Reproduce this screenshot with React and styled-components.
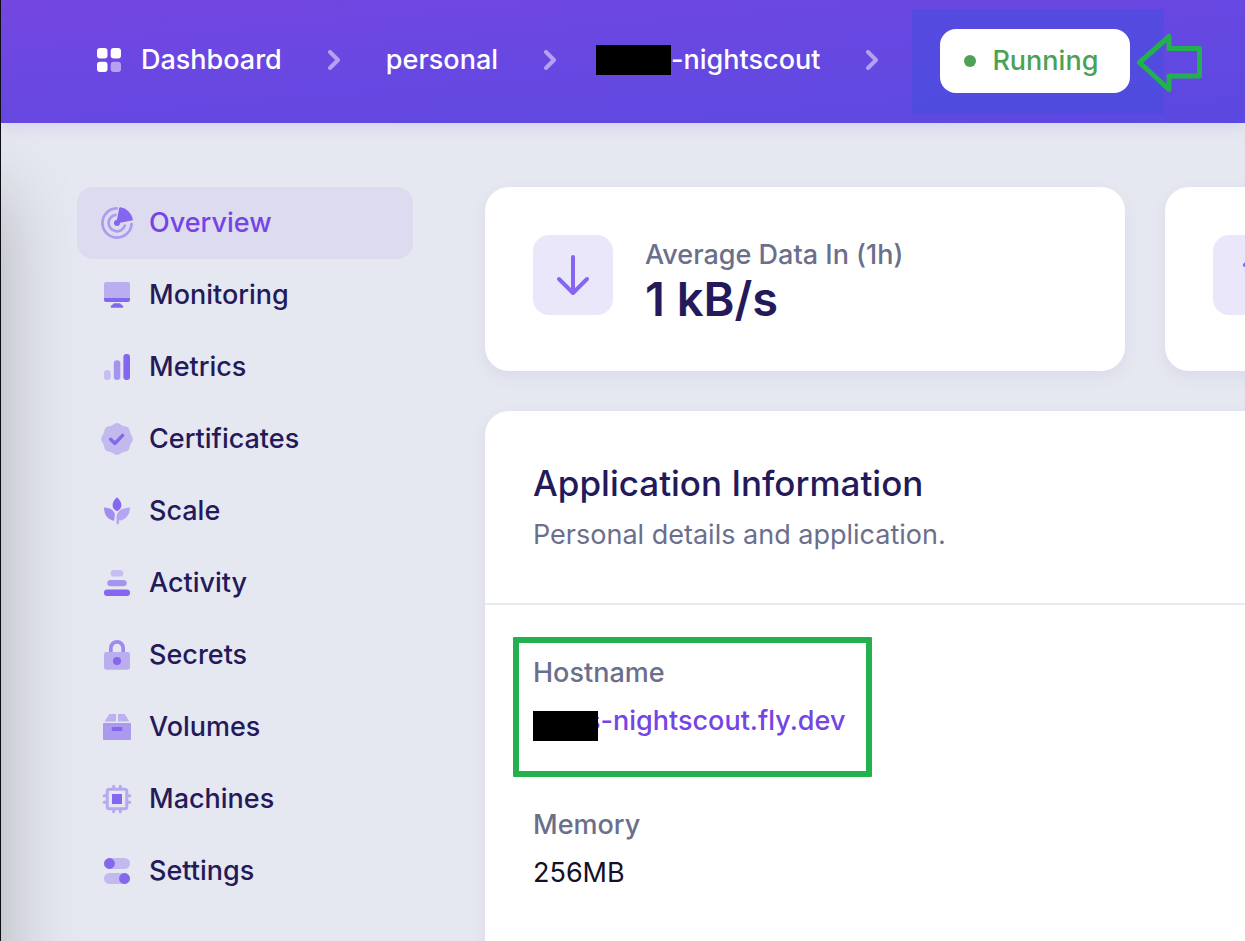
import React from "react";
import styled, { createGlobalStyle } from "styled-components";

const GlobalStyle = createGlobalStyle`
  *, *::before, *::after { box-sizing: border-box; }
  body {
    margin: 0;
    background: #e5e8f0;
    font-family: Inter, "Liberation Sans", sans-serif;
    font-size: 27px;
    line-height: 40px;
    color: #241a5a;
  }
  ul, ol, dl, dd, h2, p { margin: 0; padding: 0; }
  ul, ol { list-style: none; }
  a { color: inherit; text-decoration: none; }
`;

const Page = styled.div`
  display: flex;
  flex-direction: column;
  min-height: 100vh;
  border-left: 1px solid #0d0d14;
  overflow: hidden;
`;

const Header = styled.header`
  display: flex;
  align-items: center;
  height: 123px;
  padding-left: 96px;
  background: linear-gradient(175deg, #7446e2, #5a49e0);
  box-shadow: 0 2px 16px rgba(112, 70, 200, 0.16);
  position: relative;
  white-space: nowrap;
`;

const Crumbs = styled.ol`
  display: flex;
  align-items: center;
  padding-bottom: 4px;
  color: #fff;
  font-weight: 500;
`;

const Crumb = styled.li`
  display: flex;
  align-items: center;
`;

const CrumbLink = styled.a`
  display: flex;
  align-items: center;
  gap: 20px;
`;

const Chevron = styled.svg`
  flex: none;
  width: 12px;
  height: 20px;
  margin: 0 ${(p) => (p.$tight ? 40 : 46)}px 0 46px;
`;

const Redaction = styled.span`
  display: inline-block;
  position: relative;
  flex: none;
  width: ${(p) => p.$width}px;
  height: 30px;
  background: #000;
`;

const NamedApp = styled.a`
  display: flex;
  align-items: center;
`;

const StatusArea = styled.div`
  position: relative;
  flex: none;
  margin-left: -12px;
  padding: 20px 34px 21px 28px;
  background: rgba(66, 78, 222, 0.5);
`;

const Status = styled.button`
  display: flex;
  align-items: center;
  gap: 16px;
  height: 64px;
  padding: 0 32px 0 24px;
  border: 0;
  border-radius: 16px;
  background: #fff;
  color: #4ca154;
  font: inherit;
  font-weight: 500;
`;

const Dot = styled.span`
  width: 12px;
  height: 12px;
  border-radius: 50%;
  background: currentColor;
`;

const Pointer = styled.svg`
  position: absolute;
  left: 224px;
  top: 23px;
  width: 68px;
  height: 62px;
`;

const Body = styled.div`
  position: relative;
  display: flex;
  flex: 1;
  gap: 72px;
  padding: 64px 0 0 76px;
  overflow: hidden;

  &::before {
    content: "";
    position: absolute;
    left: -100px;
    top: 72px;
    bottom: -100px;
    width: 100px;
    box-shadow: 0 0 76px rgba(16, 12, 20, 0.25);
  }
`;

const Sidebar = styled.nav`
  position: relative;
  flex: none;
  width: 336px;
`;

const NavLink = styled.a`
  display: flex;
  align-items: center;
  gap: 16px;
  height: 72px;
  padding: 0 24px;
  border-radius: 16px;
  font-weight: 500;
  color: ${(p) => (p.$active ? "#7445e4" : "#241a5a")};
  background: ${(p) => (p.$active ? "#dddbef" : "transparent")};
`;

const NavIcon = styled.svg`
  flex: none;
  width: 32px;
  height: 32px;
  fill: #8466ef;
`;

const Main = styled.main`
  flex: none;
  display: flex;
  flex-direction: column;
  gap: 40px;
`;

const Stats = styled.div`
  display: flex;
  gap: 40px;
`;

const Card = styled.section`
  border-radius: 24px;
  background: #fff;
  box-shadow: 0 6px 16px rgba(112, 70, 180, 0.08);
`;

const StatCard = styled(Card)`
  display: flex;
  gap: 32px;
  width: 640px;
  padding: 48px;
`;

const StatIcon = styled.svg`
  flex: none;
  width: 80px;
  height: 80px;
  border-radius: 16px;
  background: #ebe7fb;
  fill: none;
  stroke: #8466ef;
  stroke-width: 4;
  stroke-linecap: round;
  stroke-linejoin: round;
`;

const StatLabel = styled.p`
  font-weight: 500;
  color: #6b6f8c;
`;

const StatValue = styled.p`
  font-size: 47px;
  line-height: 48px;
  font-weight: 600;
`;

const InfoCard = styled(Card)`
  flex: 1;
  border-radius: 24px 24px 0 0;
`;

const InfoHeader = styled.header`
  padding: 48px;
  border-bottom: 2px solid #e8ebf2;
`;

const InfoTitle = styled.h2`
  margin-bottom: 8px;
  font-size: 35px;
  line-height: 48px;
  font-weight: 500;
`;

const InfoText = styled.p`
  color: #6b6f8c;
`;

const Details = styled.dl`
  display: flex;
  flex-direction: column;
  align-items: flex-start;
  gap: 64px;
  padding: 48px 48px 24px;
`;

const Detail = styled.div`
  position: relative;
`;

const Term = styled.dt`
  margin-bottom: 8px;
  font-weight: 500;
  color: #6b6f8c;
`;

const Value = styled.dd`
  color: #12102a;
`;

const HostLink = styled.a`
  display: flex;
  align-items: flex-end;
  font-weight: 500;
  color: #7445e4;

  ${Redaction} {
    margin-right: -12px;
  }
`;

const Highlight = styled.span`
  position: absolute;
  inset: -16px -27px -36px -20px;
  border: 6px solid #22b14c;
  border-radius: 1px;
  pointer-events: none;
`;

const sealPath =
  Array.from({ length: 96 }, (_, i) => {
    const a = (i / 96) * Math.PI * 2;
    const r = 15.2 + 0.7 * Math.cos(8 * a);
    return `${i ? "L" : "M"}${(16 + r * Math.sin(a)).toFixed(2)} ${(16 - r * Math.cos(a)).toFixed(2)}`;
  }).join("") + "Z";

const icons = {
  Overview: (
    <>
      <g fill="none" stroke="#8466ef" strokeOpacity=".55" strokeWidth="2.7" strokeLinecap="round">
        <path d="M15.5 1.4A14.6 14.6 0 1 0 30.6 17" />
        <path d="M14.5 7.8A8.3 8.3 0 1 0 23.8 18.6" />
      </g>
      <circle cx="16" cy="16" r="3" />
      <path d="M15.2 16.5L18.2 1.2Q18.5 0 19.7 .2A16 16 0 0 1 31.8 12.2Q32 13.3 30.8 13.6Z" />
    </>
  ),
  Monitoring: (
    <>
      <path opacity=".45" d="M3 19V5a2 2 0 0 1 2-2h22a2 2 0 0 1 2 2v14z" />
      <path d="M3 19h26v2a2 2 0 0 1-2 2H5a2 2 0 0 1-2-2z" />
      <path d="M12.8 24.2h6.4c.4 1.7 3.1 1.6 3.1 3.5 0 .8-.4 1.1-1 1.1H10.7c-.6 0-1-.3-1-1.1 0-1.9 2.7-1.8 3.1-3.5z" />
    </>
  ),
  Metrics: (
    <>
      <rect opacity=".32" x="3" y="19" width="6.6" height="10" rx="3.3" />
      <rect opacity=".65" x="12.8" y="9.3" width="6.5" height="19.7" rx="3.2" />
      <rect x="22.4" y="3" width="6.6" height="26" rx="3" />
    </>
  ),
  Certificates: (
    <>
      <path opacity=".36" d={sealPath} />
      <path d="M9.6 16.2l4.4 4.2 7.6-8" fill="none" stroke="#8466ef" strokeWidth="3.4" strokeLinecap="round" strokeLinejoin="round" />
    </>
  ),
  Scale: (
    <>
      <path d="M16 2.3c2.6 2.3 4.4 5 4.4 7.9 0 2.7-1.7 4.8-4.4 6-2.7-1.2-4.4-3.300-4.400-6 0-2.900 1.800-5.600 4.400-7.900z" />
      <path opacity=".7" d="M3 12.400c5.800 0 10.300 2.500 11 7.400-.6 1.900-.3 3.800-1 6C7 24.700 3 20 3 12.400z" />
      <path opacity=".5" d="M29 12.400c-7.400 0-13.500 3.600-13.500 10.200v5.200c0 2 2.500 2 2.500 0v-2.300c6.300-.4 11-5.600 11-13.100z" />
    </>
  ),
  Activity: (
    <>
      <rect opacity=".32" x="9.7" y="3" width="12.6" height="6.5" rx="3.2" />
      <rect opacity=".65" x="6.3" y="12.9" width="19.4" height="6.4" rx="3.2" />
      <rect x="3" y="22.4" width="26" height="6.5" rx="3.2" />
    </>
  ),
  Secrets: (
    <>
      <path opacity=".72" d="M8 13V9a8 8 0 0 1 16 0v4h-3.700V9a4.300 4.300 0 0 0-8.600 0v4z" />
      <rect opacity=".45" x="3" y="13" width="26" height="17.7" rx="2.4" />
      <circle cx="16" cy="22" r="4" />
    </>
  ),
  Volumes: (
    <>
      <path opacity=".42" d="M8.300 3H15v7.500H3.600zM17 3h6.700l4.700 7.500H17z" />
      <rect opacity=".6" x="2" y="12" width="28" height="17" rx="1" />
      <rect x="10.8" y="16" width="10.6" height="4" rx=".8" />
    </>
  ),
  Machines: (
    <>
      <g fill="none" stroke="#8466ef" strokeWidth="3" opacity=".48">
        <rect x="6.2" y="6.2" width="19.6" height="19.6" rx="2" />
        <path strokeLinecap="round" d="M12.7 3.2v1.5M19.3 3.2v1.5M12.7 27.3v1.5M19.3 27.3v1.5M3.2 12.7h1.5M3.2 19.3h1.5M27.3 12.7h1.5M27.3 19.3h1.5" />
      </g>
      <rect x="11" y="11" width="10" height="10" rx=".5" />
    </>
  ),
  Settings: (
    <>
      <rect opacity=".36" x="3" y="3" width="26" height="11" rx="5.5" />
      <rect opacity=".36" x="3" y="18" width="26" height="11" rx="5.5" />
      <circle cx="8.5" cy="8.5" r="5.4" />
      <circle cx="23.5" cy="23.5" r="5.4" />
    </>
  ),
};

function Separator({ tight }) {
  return (
    <Chevron $tight={tight} viewBox="0 0 12 20" aria-hidden="true">
      <path d="M2 2l8 8-8 8" fill="none" stroke="#b4a1f0" strokeWidth="4" strokeLinecap="round" strokeLinejoin="round" />
    </Chevron>
  );
}

export default function App() {
  return (
    <Page>
      <GlobalStyle />
      <Header>
        <Crumbs>
          <Crumb>
            <CrumbLink href="#dashboard">
              <svg width="24" height="24" viewBox="0 0 24 24" fill="#fff" aria-hidden="true">
                <rect width="10.5" height="10.5" rx="3" />
                <rect x="13.7" width="10.3" height="10.5" rx="3" />
                <rect y="13.7" width="10.5" height="10.3" rx="3" />
                <rect x="13.7" y="13.7" width="10.3" height="10.3" rx="3" fill="#b4a1f0" />
              </svg>
              Dashboard
            </CrumbLink>
            <Separator />
          </Crumb>
          <Crumb>
            <CrumbLink href="#personal">personal</CrumbLink>
            <Separator tight />
          </Crumb>
          <Crumb>
            <NamedApp href="#app">
              <Redaction $width={75} />
              -nightscout
            </NamedApp>
            <Separator />
          </Crumb>
        </Crumbs>
        <StatusArea>
          <Status type="button">
            <Dot />
            Running
          </Status>
          <Pointer viewBox="0 0 68 62" aria-hidden="true">
            <path d="M3.5 30.5L33 4.5V16.5H63.5V44H33V57.5Z" fill="none" stroke="#22b14c" strokeWidth="5" strokeLinejoin="round" />
          </Pointer>
        </StatusArea>
      </Header>
      <Body>
        <Sidebar aria-label="App">
          <ul>
            {Object.entries(icons).map(([name, icon]) => (
              <li key={name}>
                <NavLink href={"#" + name.toLowerCase()} $active={name === "Overview"}>
                  <NavIcon viewBox="0 0 32 32" aria-hidden="true">{icon}</NavIcon>
                  {name}
                </NavLink>
              </li>
            ))}
          </ul>
        </Sidebar>
        <Main>
          <Stats>
            <StatCard>
              <StatIcon viewBox="0 0 80 80" aria-hidden="true">
                <path d="M40 22v36M26 44l14 14 14-14" />
              </StatIcon>
              <div>
                <StatLabel>Average Data In (1h)</StatLabel>
                <StatValue>1 kB/s</StatValue>
              </div>
            </StatCard>
            <StatCard>
              <StatIcon viewBox="0 0 80 80" aria-hidden="true">
                <path d="M44 54V18M32 30l12-12 12 12" />
              </StatIcon>
            </StatCard>
          </Stats>
          <InfoCard>
            <InfoHeader>
              <InfoTitle>Application Information</InfoTitle>
              <InfoText>Personal details and application.</InfoText>
            </InfoHeader>
            <Details>
              <Detail>
                <Term>Hostname</Term>
                <Value>
                  <HostLink href="#hostname">
                    <Redaction $width={65} />
                    s-nightscout.fly.dev
                  </HostLink>
                </Value>
                <Highlight />
              </Detail>
              <Detail>
                <Term>Memory</Term>
                <Value>256MB</Value>
              </Detail>
            </Details>
          </InfoCard>
        </Main>
      </Body>
    </Page>
  );
}
